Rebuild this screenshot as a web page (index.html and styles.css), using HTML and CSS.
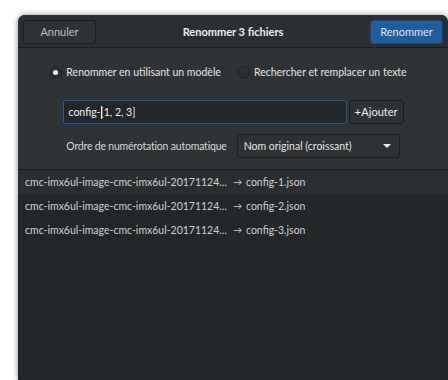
FILE: index.html
```html
<!DOCTYPE html>
<html lang="fr">
<head>
<meta charset="utf-8">
<link rel="stylesheet" href="styles.css">
</head>
<body>
<div class="window">
  <header class="headerbar">
    <button class="btn cancel">Annuler</button>
    <div class="title">Renommer 3 fichiers</div>
    <button class="btn suggested">Renommer</button>
  </header>
  <section class="controls">
    <div class="radio-row">
      <label class="radio checked"><span class="dot"></span>Renommer en utilisant un modèle</label>
      <label class="radio"><span class="dot"></span>Rechercher et remplacer un texte</label>
    </div>
    <div class="entry-row">
      <div class="entry">config-<span class="cursor"></span>[1, 2, 3]</div>
      <button class="btn add">+ Ajouter</button>
    </div>
    <div class="order-row">
      <span class="order-label">Ordre de numérotation automatique</span>
      <div class="combo"><span>Nom original (croissant)</span><span class="arrow"></span></div>
    </div>
  </section>
  <section class="list">
    <div class="row hover"><span class="old">cmc-imx6ul-image-cmc-imx6ul-20171124...</span><span class="to">→</span><span class="new">config-1.json</span></div>
    <div class="row"><span class="old">cmc-imx6ul-image-cmc-imx6ul-20171124...</span><span class="to">→</span><span class="new">config-2.json</span></div>
    <div class="row"><span class="old">cmc-imx6ul-image-cmc-imx6ul-20171124...</span><span class="to">→</span><span class="new">config-3.json</span></div>
  </section>
</div>
</body>
</html>
```

FILE: styles.css
```css
html, body {
  margin: 0;
  padding: 0;
  background: #ffffff;
  height: 380px;
  overflow: hidden;
}
body {
  font-family: Lato, "Open Sans", "DejaVu Sans", sans-serif;
  font-size: 10.5px;
  color: #eeeeec;
}
.window {
  margin: 15px 0 0 18px;
  width: 430px;
  height: 365px;
  background: #2f3336;
  border-radius: 7px 7px 0 0;
  box-shadow: 0 0 6px rgba(0,0,0,0.45);
  display: flex;
  flex-direction: column;
  overflow: hidden;
}
.headerbar {
  height: 33px;
  box-sizing: border-box;
  padding: 5px 5px 0 5px;
  display: flex;
  align-items: flex-start;
  background: #2b2f32;
  border-bottom: 1px solid #1b1e1f;
}
.btn {
  font-family: inherit;
  font-size: 11px;
  height: 24px;
  box-sizing: border-box;
  border: 1px solid #1b1e1f;
  border-radius: 3px;
  background: #2e3235;
  color: #eeeeec;
  padding: 0 8px;
  line-height: 20px;
  white-space: nowrap;
}
.cancel {
  width: 73px;
  color: #bdbfbf;
}
.suggested {
  width: 73px;
  background: #215d9c;
  border-color: #184472;
  color: #dfe6ee;
}
.title {
  flex: 1;
  text-align: center;
  font-weight: bold;
  font-size: 11px;
  line-height: 24px;
}
.controls {
  height: 122px;
  box-sizing: border-box;
  border-bottom: 1px solid #1b1e1f;
  display: flex;
  flex-direction: column;
  align-items: center;
  padding-top: 15px;
}
.radio-row {
  display: flex;
  gap: 16px;
  height: 18px;
  align-items: center;
  margin-left: -10px;
}
.radio {
  display: flex;
  align-items: center;
  gap: 4px;
  color: #e4e5e4;
}
.dot {
  width: 13px;
  height: 13px;
  box-sizing: border-box;
  border-radius: 50%;
  border: 1px solid #1b1e1f;
  background: #2c3033;
  box-shadow: 0 0 0 0.5px #3a3f42;
  display: flex;
  align-items: center;
  justify-content: center;
}
.checked .dot::after {
  content: "";
  width: 5px;
  height: 5px;
  border-radius: 50%;
  background: #eeeeec;
}
.entry-row {
  display: flex;
  gap: 2px;
  margin-top: 19px;
}
.entry {
  width: 284px;
  height: 24px;
  box-sizing: border-box;
  border: 1px solid #215d9c;
  border-radius: 3px;
  background: #232729;
  padding: 0 5px;
  line-height: 22px;
  color: #eeeeec;
}
.cursor {
  display: inline-block;
  width: 1px;
  height: 13px;
  background: #eeeeec;
  vertical-align: -3px;
  margin-right: -1px;
}
.add {
  width: 55px;
  padding: 0 2px;
  font-size: 11px;
  word-spacing: -2px;
}
.order-row {
  display: flex;
  align-items: center;
  gap: 10px;
  margin-top: 10px;
}
.order-label {
  color: #d6d7d6;
  letter-spacing: -0.2px;
}
.combo {
  width: 163px;
  height: 24px;
  box-sizing: border-box;
  border: 1px solid #1b1e1f;
  border-radius: 3px;
  background: #2e3235;
  display: flex;
  align-items: center;
  justify-content: space-between;
  padding: 0 8px 0 6px;
  color: #e4e5e4;
}
.arrow {
  width: 0;
  height: 0;
  border-left: 4px solid transparent;
  border-right: 4px solid transparent;
  border-top: 4px solid #eeeeec;
}
.list {
  flex: 1;
  background: #232729;
}
.row {
  height: 24px;
  line-height: 24px;
  padding-left: 7px;
  display: flex;
  color: #cfd0cf;
  white-space: nowrap;
}
.row.hover {
  background: #2a2e30;
}
.old {
  width: 208px;
}
.to {
  width: 13px;
  font-size: 9px;
}
```
